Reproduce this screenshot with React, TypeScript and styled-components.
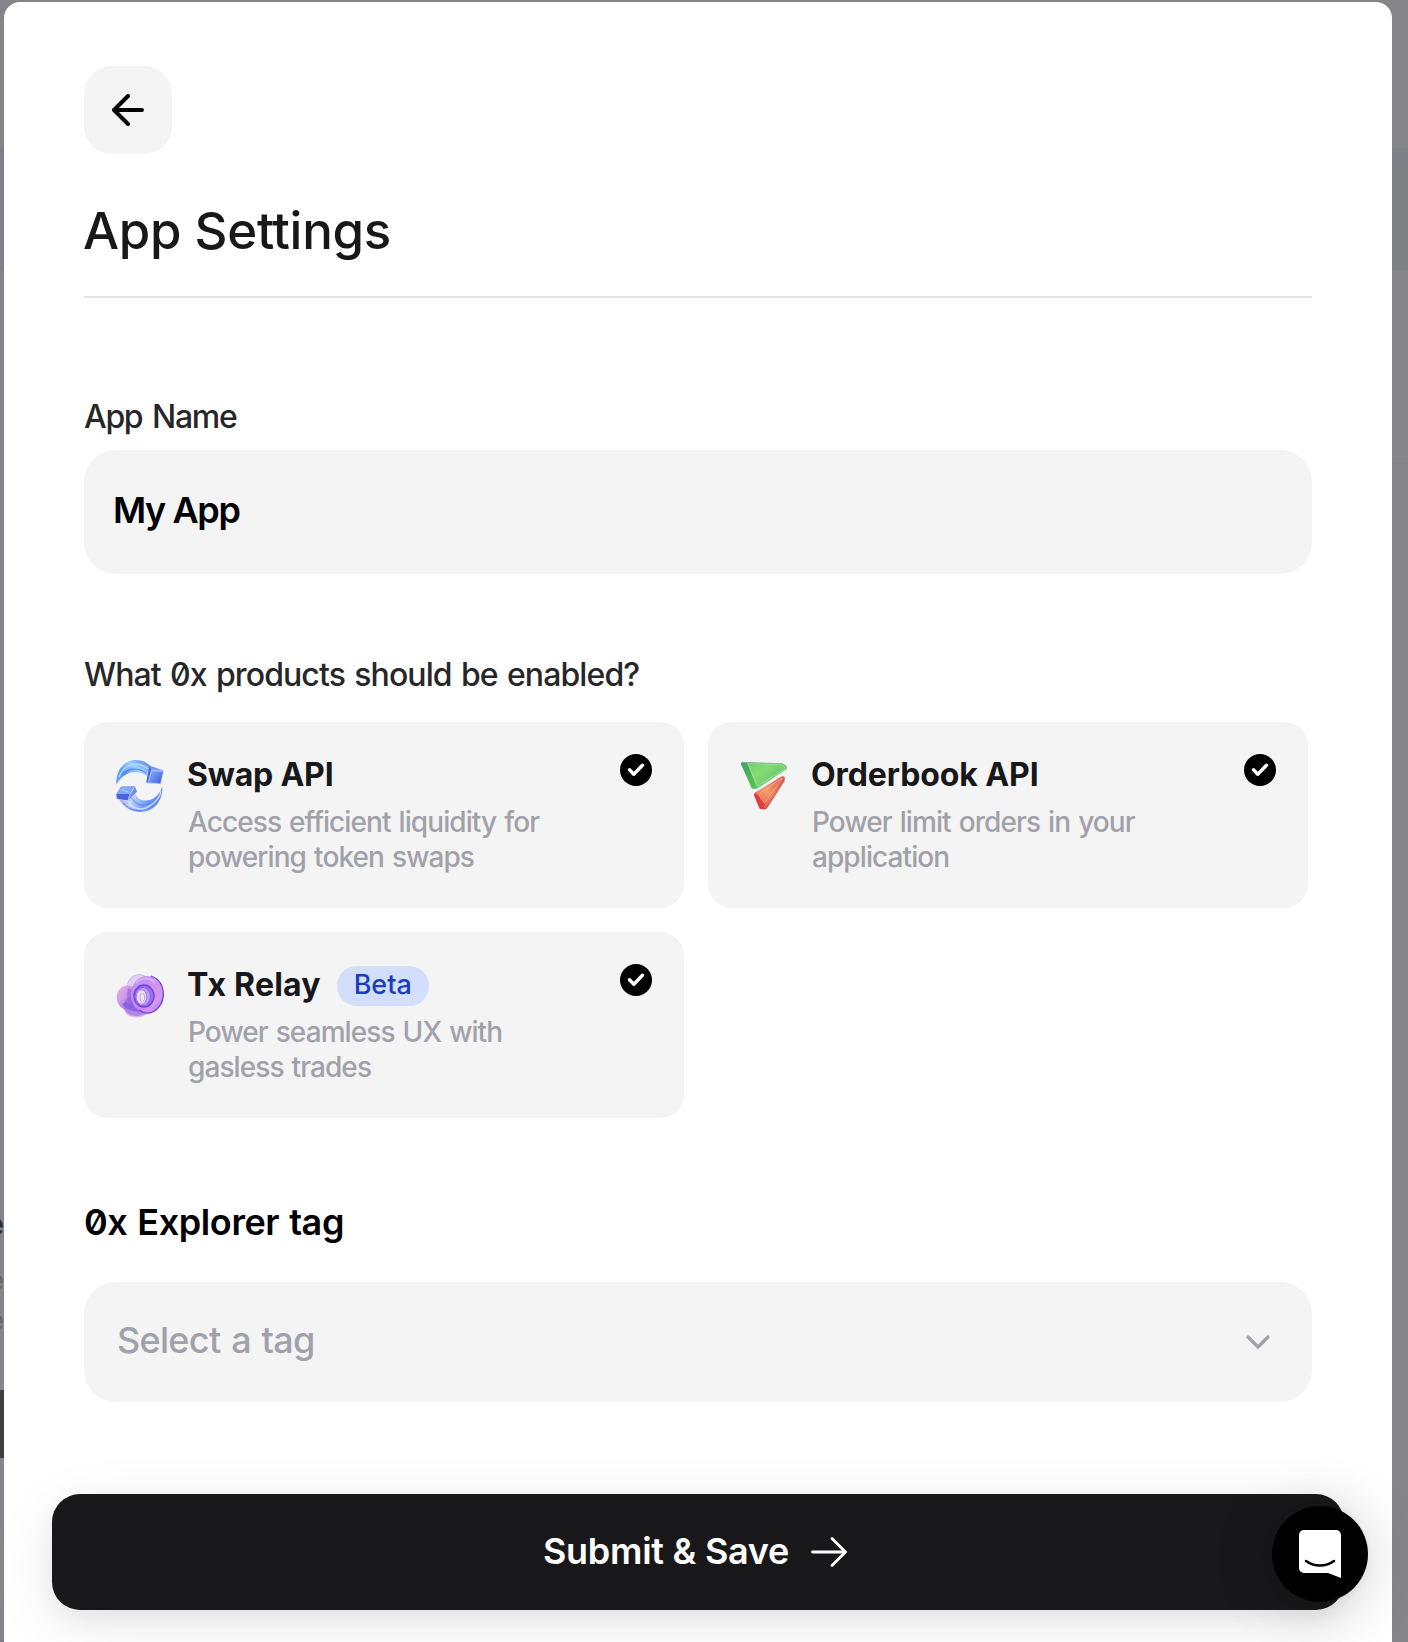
import React from "react";
import styled, { createGlobalStyle } from "styled-components";

const GlobalStyle = createGlobalStyle`
  *, *::before, *::after { box-sizing: border-box; }
  body {
    margin: 0;
    background: #848489;
    font-family: Inter, "Liberation Sans", sans-serif;
    font-feature-settings: "zero";
    color: #18181a;
    -webkit-font-smoothing: antialiased;
  }
  button, input { font: inherit; border: 0; margin: 0; }
`;

const Screen = styled.div`
  display: grid;
  grid-template-columns: 4px 1388px 16px;
  width: 1408px;
  height: 1642px;
  overflow: hidden;
`;

const Edge = styled.div`
  display: flex;
  flex-direction: column;
  overflow: hidden;
`;

const Strip = styled.div<{ $h: number; $bg?: string }>`
  flex: none;
  height: ${(p) => p.$h}px;
  background: ${(p) => p.$bg ?? "#848489"};
`;

const ClippedText = styled(Strip)<{ $color: string; $size: number; $weight?: number }>`
  display: flex;
  justify-content: flex-end;
  align-items: center;
  overflow: hidden;
  color: ${(p) => p.$color};
  font-size: ${(p) => p.$size}px;
  font-weight: ${(p) => p.$weight ?? 400};
  line-height: 1;
`;

const Modal = styled.main`
  display: flex;
  flex-direction: column;
  height: 1640px;
  margin-top: 2px;
  border-radius: 16px 16px 0 0;
  background: #fff;
`;

const Content = styled.div`
  display: flex;
  flex-direction: column;
  padding: 64px 80px 0;
`;

const BackButton = styled.button`
  display: grid;
  place-items: center;
  width: 88px;
  height: 88px;
  padding: 0;
  border-radius: 28px;
  background: #f4f4f4;
`;

const Title = styled.h1`
  margin: 46px 0 0;
  padding-bottom: 35px;
  border-bottom: 2px solid #e4e4e5;
  font-size: 51px;
  font-weight: 450;
  line-height: 61px;
  letter-spacing: -0.3px;
  text-indent: -1px;
`;

const Label = styled.label<{ $top: number; $gap: number; $spacing: number; $word: number }>`
  margin: ${(p) => p.$top}px 0 ${(p) => p.$gap}px;
  color: #27272a;
  font-size: 32px;
  font-weight: 450;
  line-height: 40px;
  letter-spacing: ${(p) => p.$spacing}px;
  word-spacing: ${(p) => p.$word}px;
`;

const NameInput = styled.input`
  width: 100%;
  height: 124px;
  padding: 0 29px 4px;
  border-radius: 32px;
  background: #f4f4f4;
  color: #000;
  font-size: 36px;
  font-weight: 600;
  letter-spacing: -1.4px;
  outline: none;
`;

const Products = styled.div`
  display: grid;
  grid-template-columns: 600px 600px;
  gap: 24px;
`;

const Card = styled.article`
  display: flex;
  align-items: flex-start;
  height: 186px;
  padding: 32px;
  border-radius: 24px;
  background: #f4f4f4;
`;

const CardText = styled.div`
  flex: 1;
  margin-left: 24px;
`;

const CardHeading = styled.div`
  display: flex;
  align-items: flex-start;
  height: 40px;
  gap: 16px;
`;

const CardTitle = styled.h2<{ $spacing: number }>`
  margin: 1px 0 0 -1px;
  font-size: 32px;
  font-weight: 700;
  line-height: 40px;
  letter-spacing: ${(p) => p.$spacing}px;
  white-space: nowrap;
`;

const Badge = styled.span`
  width: 92px;
  height: 40px;
  margin-top: 2px;
  border-radius: 20px;
  background: #d3defb;
  color: #1a3dbc;
  font-size: 27px;
  font-weight: 450;
  line-height: 38px;
  text-align: center;
`;

const Description = styled.p`
  width: 372px;
  margin: 11px 0 0;
  color: #a1a1aa;
  font-size: 28px;
  font-weight: 450;
  line-height: 35px;
  letter-spacing: -0.92px;
  word-spacing: 1.5px;
  white-space: nowrap;
`;

const SectionTitle = styled.h3`
  margin: 82px 0 38px;
  color: #000;
  font-size: 36px;
  font-weight: 600;
  line-height: 44px;
  letter-spacing: -0.4px;
  word-spacing: 1.2px;
`;

const Select = styled.button`
  display: flex;
  align-items: center;
  justify-content: space-between;
  height: 120px;
  padding: 0 40px 0 33px;
  border-radius: 32px;
  background: #f4f4f4;
  color: #a1a1aa;
  font-size: 36px;
  font-weight: 550;
  letter-spacing: -0.7px;
  word-spacing: 1.8px;
`;

const RaisedText = styled.span<{ $lift: number }>`
  padding-bottom: ${(p) => p.$lift}px;
`;

const Footer = styled.footer`
  padding: 92px 48px 32px;
`;

const SubmitButton = styled.button`
  display: flex;
  align-items: center;
  justify-content: center;
  gap: 22px;
  width: 1292px;
  height: 116px;
  padding: 0 6px 0 0;
  border-radius: 28px;
  background: #18181a;
  color: #fff;
  font-size: 36px;
  font-weight: 600;
  letter-spacing: -0.28px;
  box-shadow: 0 8px 24px rgba(24, 24, 48, 0.06), 0 16px 64px rgba(0, 0, 0, 0.08);
`;

const ChatLauncher = styled.button`
  position: fixed;
  left: 1272px;
  top: 1506px;
  display: grid;
  place-items: center;
  width: 96px;
  height: 96px;
  padding: 0;
  border-radius: 50%;
  background: #000;
  box-shadow: 0 2px 12px rgba(0, 0, 0, 0.06), 0 4px 64px rgba(0, 0, 0, 0.16);
`;

const ProductArt = styled.svg`
  flex: none;
  width: 48px;
  height: 60px;
  overflow: visible;
`;

function SwapArt() {
  return (
    <ProductArt viewBox="0 0 48 60">
      <defs>
        <linearGradient id="swapTop" x1="0" y1="1" x2="1" y2="0">
          <stop offset="0" stopColor="#6ba9f8" />
          <stop offset="0.35" stopColor="#5b9af5" />
          <stop offset="0.65" stopColor="#9fd0fc" />
          <stop offset="1" stopColor="#4a6ee8" />
        </linearGradient>
        <linearGradient id="swapBottom" x1="0" y1="0" x2="1" y2="0.3">
          <stop offset="0" stopColor="#8b8df0" />
          <stop offset="0.4" stopColor="#c2d4fc" />
          <stop offset="0.7" stopColor="#77a3f6" />
          <stop offset="1" stopColor="#5b82f4" />
        </linearGradient>
        <linearGradient id="swapCube" x1="0" y1="0" x2="1" y2="1">
          <stop offset="0" stopColor="#86b5fa" />
          <stop offset="1" stopColor="#3d55e0" />
        </linearGradient>
      </defs>
      <path d="M.3 31C-.8 17 8 6 19 6c7 0 12 2.500 16 6.500L31 22C20 14 7 18 .3 31Z" fill="url(#swapTop)" />
      <path d="M3 23C7 13 16 8 25 11c3 1 5 2 8 4" fill="none" stroke="#b8e1ff" strokeWidth="1.4" opacity=".8" />
      <path d="M6 21c6-7 16-8 24-2" fill="none" stroke="#3e70e8" strokeWidth="1.1" opacity=".7" />
      <path d="m33.500 11.500 14 5-2.800 13.300-14.200-.8Z" fill="#7c9df6" />
      <path d="m35.500 16.500 11.500.7-3 12.100-10.500-1.600Z" fill="url(#swapCube)" />
      <path d="m33.500 11.500 2 5-3.200 12-2-.5Z" fill="#4a68e4" />
      <path d="m35.500 16.500 11.300.7M35.500 16.500l-3 11.500" fill="none" stroke="#b9d5ff" strokeWidth=".9" />
      <path d="M3.500 46C8 53.500 15 58 24 58c13 0 22.500-10 22.400-25C42 43 36 47 28 46.500c-4-.2-7-2.500-8.500-6.500L12 46.500Z" fill="url(#swapBottom)" />
      <path d="M12 47c5 8 13 10 20 6s12-9 13-16" fill="none" stroke="#dce9ff" strokeWidth="1.5" opacity=".8" />
      <path d="M16 44c4 8 12 9 19 4" fill="none" stroke="#6286f2" strokeWidth="1.200" opacity=".8" />
      <path d="M7 49c5 6 11 8 18 7.500" fill="none" stroke="#5c62e9" strokeWidth="1.300" opacity=".6" />
      <path d="m5 32.800 14-.6 2 5.500-8.500 8.600L.8 44.800 0 40.500Z" fill="#6d8cf0" />
      <path d="m5 32.800 14-.6-5 8L1 40Z" fill="#7fa8f8" />
      <path d="m1 40 13 .2-2 6L1.500 45Z" fill="#4a62e0" />
      <path d="m6 35.500 6 2.500M14 40.200l5-8M14 40.200l-1.800 6" stroke="#c0d9ff" strokeWidth=".9" />
    </ProductArt>
  );
}

function OrderbookArt() {
  return (
    <ProductArt viewBox="0 0 48 60">
      <defs>
        <linearGradient id="bookGreen" x1="0" y1="0" x2="1" y2=".7">
          <stop offset="0" stopColor="#69c873" />
          <stop offset=".45" stopColor="#86dc73" />
          <stop offset="1" stopColor="#5bbb72" />
        </linearGradient>
        <linearGradient id="bookSide" x1="0" y1="0" x2="0" y2="1">
          <stop offset="0" stopColor="#45a263" />
          <stop offset="1" stopColor="#53c750" />
        </linearGradient>
        <radialGradient id="bookRed" cx=".4" cy=".42" r=".6">
          <stop offset="0" stopColor="#f3a56b" />
          <stop offset=".55" stopColor="#ea7560" />
          <stop offset="1" stopColor="#d75b56" />
        </radialGradient>
      </defs>
      <path d="M2.500 8.200 43 9.800c3 1 4.500 3 3.800 5.200L17 34.700l-5-.3L1.200 10.500c-.4-1.200 0-2 1.300-2.300Z" fill="url(#bookGreen)" />
      <path d="M2.500 8.200 7.500 9 17 34.600l-5-.2L1.200 10.500c-.4-1.200 0-2 1.300-2.300Z" fill="url(#bookSide)" />
      <path d="M7.500 9 42 11l3.500 3.300L17.500 32Z" fill="none" stroke="#a7e6a3" strokeWidth="1" opacity=".75" />
      <path d="M2.500 8.300 43 9.900" stroke="#75b99c" strokeWidth="1" />
      <path d="M42 22.300c2-.5 3 .5 3 2.500L26.500 54c-1 1.600-6 1.600-7 0L14 41.500c-.5-1.600.3-2.700 2-3.600Z" fill="url(#bookRed)" />
      <path d="M14 41c1.500-1.500 3-1 4.500 0L24 49l-1 6c-2 .3-3 0-3.500-1Z" fill="#df3e38" />
      <path d="M18 40.500 42.500 24 24.500 49Z" fill="none" stroke="#f8ae8b" strokeWidth="1" opacity=".75" />
      <path d="m24.500 49-1 6 3-1 18-28" fill="none" stroke="#d84b46" strokeWidth="1.100" />
    </ProductArt>
  );
}

function RelayArt() {
  return (
    <ProductArt viewBox="0 0 48 60">
      <defs>
        <linearGradient id="relayDisc" x1="0" y1="0" x2="1" y2="1">
          <stop offset="0" stopColor="#b592ee" />
          <stop offset=".45" stopColor="#c98bee" />
          <stop offset=".75" stopColor="#d68cf0" />
          <stop offset="1" stopColor="#8b59ea" />
        </linearGradient>
        <linearGradient id="relayLeft" x1="0" y1="0" x2="1" y2="1">
          <stop offset="0" stopColor="#ebb0ec" />
          <stop offset=".5" stopColor="#bd86e6" />
          <stop offset="1" stopColor="#7b5ce0" />
        </linearGradient>
      </defs>
      <ellipse cx="23" cy="22" rx="12" ry="11.800" fill="#dfc6f3" opacity=".8" />
      <ellipse cx="23" cy="22" rx="11.500" ry="11.400" fill="none" stroke="#d2aee9" strokeWidth=".8" />
      <ellipse cx="11.500" cy="33.500" rx="10.800" ry="12" fill="url(#relayLeft)" opacity=".9" />
      <ellipse cx="21" cy="42" rx="13.500" ry="10.800" fill="#ab70e6" opacity=".85" />
      <path d="M10 49c6 5 15 5 21 0" fill="none" stroke="#e3b5f0" strokeWidth="1.500" />
      <path d="M8 39c5 5 10 7 17 6" fill="none" stroke="#7657dd" strokeWidth="5" opacity=".65" />
      <path d="M14 25c-2 6-1 12 3 17" fill="none" stroke="#8258de" strokeWidth="4" opacity=".5" />
      <ellipse cx="31" cy="30.500" rx="16.200" ry="18.500" fill="url(#relayDisc)" opacity=".92" />
      <path d="M35 12c8 3 12.500 10 12.300 19S41 47.500 33 49c-4 .5-7-.5-10-3" fill="none" stroke="#6541de" strokeWidth="1.300" />
      <path d="M20 19c6-6 14-6 19 0" fill="none" stroke="#e3b8f5" strokeWidth="2" opacity=".7" />
      <ellipse cx="28" cy="32" rx="10" ry="11" fill="#a075ea" stroke="#6942df" strokeWidth="1.300" />
      <ellipse cx="26.800" cy="32.500" rx="7.800" ry="9.200" fill="#c39df1" stroke="#855ce7" strokeWidth="1.100" />
      <ellipse cx="25.500" cy="33" rx="5.300" ry="7.200" fill="#eee3fb" stroke="#a274ed" strokeWidth="1" />
      <path d="M25.500 29c-2 3-2 6 0 9M27.500 29c1.500 3 1.500 6 0 9" fill="none" stroke="#a87ceb" strokeWidth=".8" />
    </ProductArt>
  );
}

function CheckMark() {
  return (
    <svg width="32" height="32" viewBox="0 0 32 32" fill="none">
      <circle cx="16" cy="16" r="16" fill="#000" />
      <path d="m9.500 15.800 4.300 4.400 8.700-9" stroke="#fff" strokeWidth="3.400" strokeLinecap="round" strokeLinejoin="round" />
    </svg>
  );
}

interface Product {
  name: string;
  spacing: number;
  lines: [string, string];
  badge?: string;
  art: React.ReactNode;
}

const products: Product[] = [
  { name: "Swap API", spacing: -0.2, lines: ["Access efficient liquidity for", "powering token swaps"], art: <SwapArt /> },
  { name: "Orderbook API", spacing: -0.1, lines: ["Power limit orders in your", "application"], art: <OrderbookArt /> },
  { name: "Tx Relay", spacing: 0.2, lines: ["Power seamless UX with", "gasless trades"], badge: "Beta", art: <RelayArt /> },
];

function ProductCard({ product }: { product: Product }) {
  return (
    <Card>
      {product.art}
      <CardText>
        <CardHeading>
          <CardTitle $spacing={product.spacing}>{product.name}</CardTitle>
          {product.badge && <Badge>{product.badge}</Badge>}
        </CardHeading>
        <Description>
          {product.lines[0]}
          <br />
          {product.lines[1]}
        </Description>
      </CardText>
      <CheckMark />
    </Card>
  );
}

export default function App() {
  return (
    <>
      <GlobalStyle />
      <Screen>
        <Edge>
          <Strip $h={148} />
          <Strip $h={122} $bg="#7f7f88" />
          <Strip $h={940} $bg="#86868a" />
          <ClippedText $h={28} $bg="#86868a" $color="#2b2b30" $size={30} $weight={600}>e</ClippedText>
          <Strip $h={28} $bg="#86868a" />
          <ClippedText $h={28} $bg="#86868a" $color="#65656d" $size={28}>e</ClippedText>
          <Strip $h={12} $bg="#86868a" />
          <ClippedText $h={28} $bg="#86868a" $color="#65656d" $size={28}>e</ClippedText>
          <Strip $h={56} $bg="#86868a" />
          <Strip $h={68} $bg="#404043" />
          <Strip $h={182} $bg="#86868a" />
          <Strip $h={2} $bg="#7c7c86" />
        </Edge>
        <Modal>
          <Content>
            <BackButton aria-label="Back">
              <svg width="32" height="32" viewBox="0 0 32 32" fill="none" stroke="#000" strokeWidth="4" strokeLinecap="round" strokeLinejoin="round">
                <path d="M30 16H2M16 2 2 16l14 14" />
              </svg>
            </BackButton>
            <Title>App Settings</Title>

            <Label htmlFor="app-name" $top={99} $gap={13} $spacing={-1.3} $word={2.5}>App Name</Label>
            <NameInput id="app-name" defaultValue="My App" />

            <Label as="div" $top={81} $gap={27} $spacing={-0.9} $word={1.6}>What 0x products should be enabled?</Label>
            <Products>
              {products.map((product) => (
                <ProductCard key={product.name} product={product} />
              ))}
            </Products>

            <SectionTitle>0x Explorer tag</SectionTitle>
            <Select>
              <RaisedText $lift={4}>Select a tag</RaisedText>
              <svg width="28" height="20" viewBox="0 0 28 20" fill="none" stroke="#a1a1aa" strokeWidth="3.200" strokeLinecap="round" strokeLinejoin="round">
                <path d="m4 5 10 10L24 5" />
              </svg>
            </Select>
          </Content>
          <Footer>
            <SubmitButton>
              <RaisedText $lift={2}>Submit &amp; Save</RaisedText>
              <svg width="36" height="30" viewBox="0 0 36 30" fill="none" stroke="#fff" strokeWidth="2.800" strokeLinecap="round" strokeLinejoin="round">
                <path d="M1.500 15h33M21 1.500 34.500 15 21 28.500" />
              </svg>
            </SubmitButton>
          </Footer>
        </Modal>
        <Edge>
          <Strip $h={148} />
          <Strip $h={122} $bg="#7f7f88" />
          <Strip $h={192} />
          <Strip $h={2} $bg="#808087" />
          <Strip $h={1178} />
        </Edge>
      </Screen>
      <ChatLauncher aria-label="Open chat">
        <svg width="42" height="48" viewBox="0 0 42 48" fill="none">
          <path d="M5 0h32a5 5 0 0 1 5 5v43l-13-5H5a5 5 0 0 1-5-5V5a5 5 0 0 1 5-5Z" fill="#fff" />
          <path d="M7 31c8 6 20 6 28 0" stroke="#000" strokeWidth="2.600" strokeLinecap="round" />
        </svg>
      </ChatLauncher>
    </>
  );
}
